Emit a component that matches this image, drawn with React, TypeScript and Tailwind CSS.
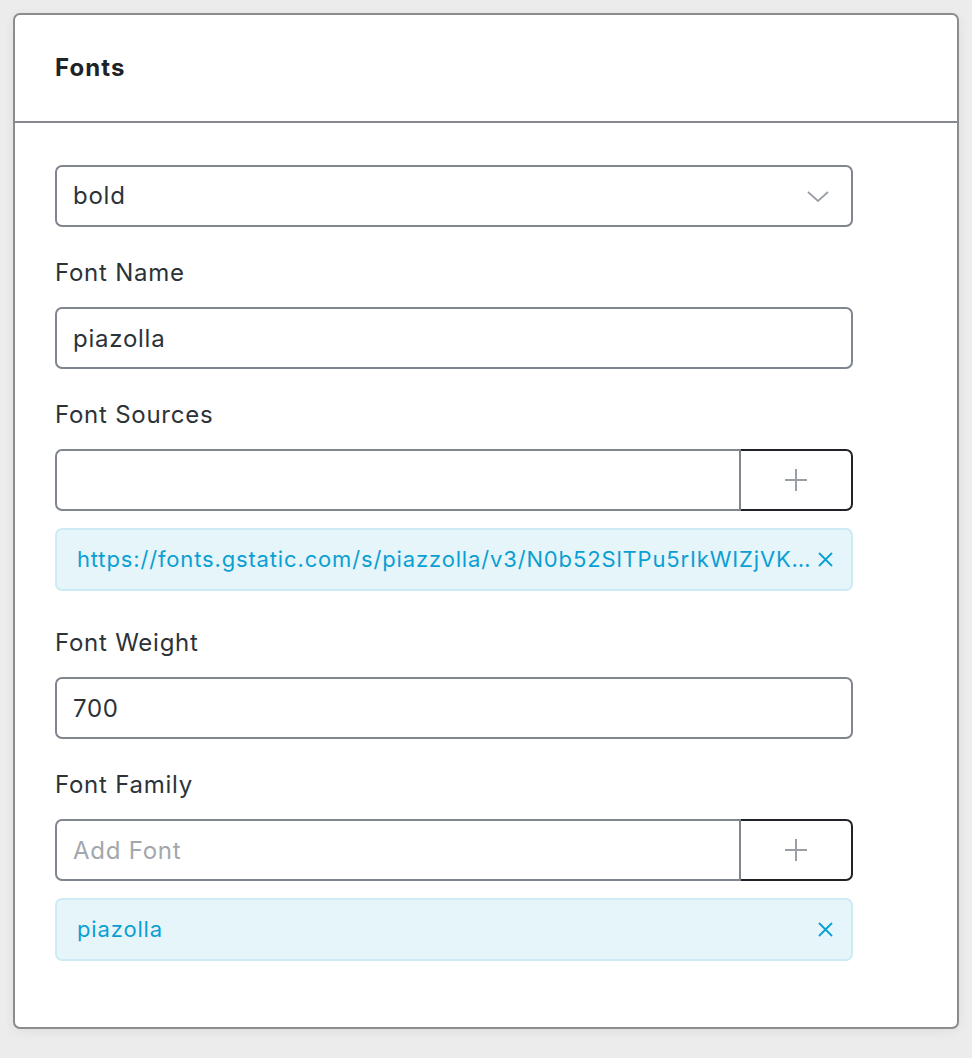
import { useState } from 'react'

const font = { fontFamily: 'Inter, "Noto Sans", sans-serif' }

function Label({ children, className = '' }: { children: React.ReactNode; className?: string }) {
  return (
    <div className={`text-[24px] leading-[34px] tracking-[0.75px] text-[#2c3338] mb-[17px] ${className}`}>{children}</div>
  )
}

function TextInput({ value, placeholder }: { value?: string; placeholder?: string }) {
  return (
    <input
      defaultValue={value}
      placeholder={placeholder}
      className="block w-full h-[62px] rounded-[7px] border-2 border-[#7f868e] bg-white pl-[16px] text-[24px] tracking-[0.75px] text-[#2c3338] placeholder:text-[#a2a7ac] outline-none"
    />
  )
}

function PlusIcon() {
  return (
    <svg width="22" height="22" viewBox="0 0 22 22" fill="none" stroke="#9a9fa5" strokeWidth="2">
      <path d="M11 0v22M0 11h22" />
    </svg>
  )
}

function CloseIcon() {
  return (
    <svg width="15" height="15" viewBox="0 0 15 15" fill="none" stroke="#0a9fd3" strokeWidth="1.8">
      <path d="M1 1l13 13M14 1L1 14" />
    </svg>
  )
}

function AddGroup({ placeholder }: { placeholder?: string }) {
  return (
    <div className="flex h-[62px]">
      <input
        placeholder={placeholder}
        className="flex-1 min-w-0 h-full rounded-l-[7px] border-2 border-[#7f868e] bg-white pl-[16px] text-[24px] tracking-[0.75px] text-[#2c3338] placeholder:text-[#a2a7ac] outline-none"
      />
      <button className="w-[112px] h-full flex items-center justify-center rounded-r-[7px] border-2 border-l-0 border-[#1f2327] bg-white">
        <PlusIcon />
      </button>
    </div>
  )
}

function Tag({ text }: { text: string }) {
  return (
    <div className="mt-[17px] h-[63px] flex items-center rounded-[7px] border-2 border-[#cdebf5] bg-[#e6f5fa] pl-[20px] pr-[18px]">
      <span className="flex-1 min-w-0 whitespace-nowrap overflow-hidden text-[22px] tracking-[0.85px] text-[#0a9fd3]">{text}</span>
      <button className="ml-[4px] flex shrink-0">
        <CloseIcon />
      </button>
    </div>
  )
}

export default function App() {
  const [weight] = useState('bold')

  return (
    <div className="min-h-screen bg-[#ececec] p-[13px]" style={font}>
      <div className="rounded-[7px] border-2 border-[#8a8c8f] bg-white shadow-[0_2px_12px_rgba(0,0,0,0.06)]">
        <div className="h-[108px] flex items-center px-[40px] border-b-2 border-[#85888c]">
          <h2 className="text-[24px] font-bold tracking-[1.1px] text-[#1e2327]">Fonts</h2>
        </div>

        <div className="pl-[40px] pt-[42px] pb-[66px]">
          <div className="w-[798px]">
            {/* Preset selector */}
            <div className="h-[62px] flex items-center justify-between rounded-[7px] border-2 border-[#7f868e] pl-[16px] pr-[22px]">
              <span className="text-[24px] tracking-[0.75px] text-[#2c3338]">{weight}</span>
              <svg width="22" height="11" viewBox="0 0 22 11" fill="none" stroke="#9a9fa5" strokeWidth="1.8">
                <path d="M1 1l10 9 10-9" />
              </svg>
            </div>

            <Label className="mt-[29px]">Font Name</Label>
            <TextInput value="piazolla" />

            <Label className="mt-[29px]">Font Sources</Label>
            <AddGroup />
            <Tag text="https://fonts.gstatic.com/s/piazzolla/v3/N0b52SlTPu5rIkWIZjVK…" />

            <Label className="mt-[35px]">Font Weight</Label>
            <TextInput value="700" />

            <Label className="mt-[29px]">Font Family</Label>
            <AddGroup placeholder="Add Font" />
            <Tag text="piazolla" />
          </div>
        </div>
      </div>
    </div>
  )
}
